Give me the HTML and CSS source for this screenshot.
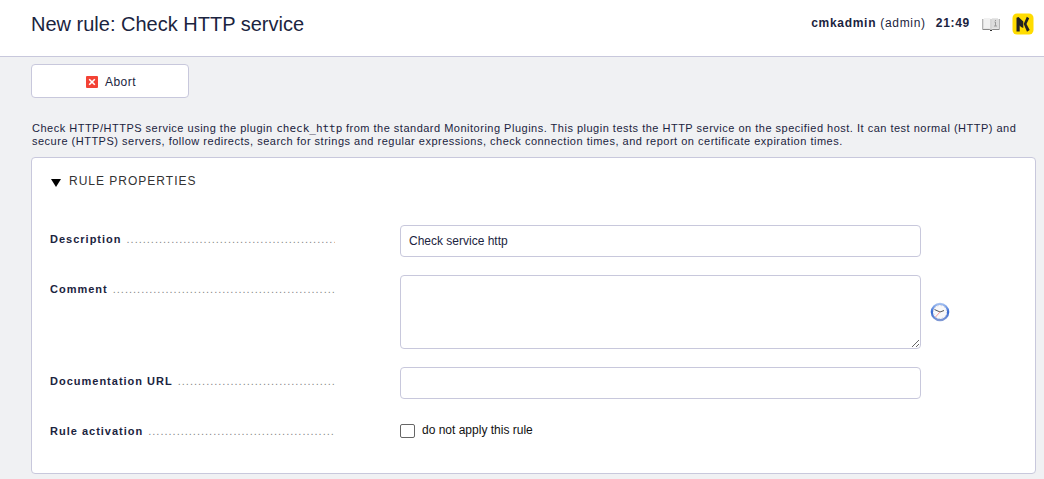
FILE: index.html
```html
<!DOCTYPE html>
<html lang="en">
<head>
<meta charset="utf-8">
<meta name="viewport" content="width=device-width, initial-scale=1">
<title>New rule: Check HTTP service</title>
<link rel="stylesheet" href="styles.css">
</head>
<body>
<header class="topbar">
  <h1 class="title">New rule: Check HTTP service</h1>
  <div class="session">
    <span class="user"><b>cmkadmin</b> (admin)</span>
    <b class="time">21:49</b>
    <svg class="manual" viewBox="0 0 18 16" role="img" aria-label="Manual">
      <path d="M.5 3v10.500h7l1.500 1 1.500-1h7V3" fill="#ddd" stroke="#b4b4b4"/>
      <path d="M2 2h5.500L9 3l1.500-1H16v10.500h-5.500L9 13.500l-1.500-1H2z" fill="#f1f1f1"/>
      <path d="M10 2.500h6V12h-6z" fill="#dcdcdc"/>
      <path d="M1 13.500h6.500L9 14.500l1.500-1H17" fill="none" stroke="#888"/>
      <path d="M8 14.500h2" stroke="#333"/>
      <path d="M9 3v10" stroke="#bbb"/>
      <path d="M12.500 6h1v4M12 10h3M13 4.500h1" fill="none" stroke="#999"/>
    </svg>
    <svg class="logo" viewBox="0 0 22 22" role="img" aria-label="Checkmk">
      <rect x=".5" y=".5" width="21" height="21" rx="4.500" fill="#ffdc00"/>
      <path d="M4.500 4.800 6.500 4l4.800 4.500v6.500L9 14l-1.300-1.500V18.500H4.500z" fill="#222"/>
      <path d="M14.800 3.800 17.200 5.200l-2.700 5.800 3.200 6-2.700 1.700-3.300-7.700z" fill="#222"/>
    </svg>
  </div>
</header>
<main class="page">
  <button class="abort" type="button">
    <svg class="abort-icon" viewBox="0 0 12 12" aria-hidden="true">
      <rect width="12" height="12" rx="1" fill="#f34235"/>
      <path d="M3.200 3.200l5.600 5.600M8.800 3.200L3.200 8.800" stroke="#fff" stroke-width="1.600"/>
    </svg>
    Abort
  </button>
  <p class="help">Check HTTP/HTTPS service using the plugin <code>check_http</code> from the standard Monitoring Plugins. This plugin tests the HTTP service on the specified host. It can test normal (HTTP) and secure (HTTPS) servers, follow redirects, search for strings and regular expressions, check connection times, and report on certificate expiration times.</p>
  <form class="panel">
    <h2 class="panel-title">
      <svg class="fold" viewBox="0 0 10 8" aria-hidden="true"><path d="M0 0h10L5 8z"/></svg>
      RULE PROPERTIES
    </h2>
    <div class="row">
      <label class="legend" for="description">Description</label>
      <input class="field" id="description" type="text" value="Check service http">
    </div>
    <div class="row">
      <label class="legend" for="comment">Comment</label>
      <textarea class="field area" id="comment"></textarea>
      <button class="stamp" type="button" aria-label="Prefix date and name">
        <svg class="clock" viewBox="0 0 20 20" aria-hidden="true">
          <defs><linearGradient id="rim" x2="0" y2="1"><stop stop-color="#a4c0f0"/><stop offset=".5" stop-color="#3569d4"/><stop offset="1" stop-color="#7f98d4"/></linearGradient></defs>
          <circle cx="10" cy="10" r="8.200" fill="#f8f8fa" stroke="url(#rim)" stroke-width="2.200"/>
          <circle cx="10" cy="10" r="6.500" fill="none" stroke="#c4c8d4" stroke-dasharray="1 2.400"/>
          <path d="M4.500 7.500 10 10l4-1.500" fill="none" stroke="#555" stroke-width="1"/>
          <path d="M10 10 5.500 15" stroke="#f49a9a" stroke-width="1"/>
        </svg>
      </button>
    </div>
    <div class="row">
      <label class="legend" for="url">Documentation URL</label>
      <input class="field" id="url" type="text">
    </div>
    <div class="row">
      <span class="legend">Rule activation</span>
      <label class="check"><input class="box" type="checkbox"> do not apply this rule</label>
    </div>
  </form>
</main>
</body>
</html>
```
FILE: styles.css
```css
* { box-sizing: border-box; }

body {
  margin: 0;
  background: #f0f1f3;
  color: #1b2440;
  font: 12px/16px "Liberation Sans", Arial, sans-serif;
}

button, input, textarea { font: inherit; color: inherit; }

.topbar {
  display: flex;
  align-items: center;
  justify-content: space-between;
  padding: 8px 10px 16px 31px;
  background: #fff;
  border-bottom: 1px solid #c8c8dc;
}

.title { margin: 0; font-size: 20px; line-height: 32px; font-weight: 400; }

.session { display: flex; align-items: center; gap: 12px; }
.user, .time { line-height: 20px; padding-bottom: 3px; letter-spacing: 0.7px; }
.user { margin-right: -2px; }
.manual { width: 18px; height: 16px; }
.logo { width: 22px; height: 22px; }

.page { padding: 7px 8px 5px 31px; }

.abort {
  display: flex;
  align-items: center;
  justify-content: center;
  gap: 7px;
  width: 158px;
  height: 34px;
  padding: 2px 0 0 2px;
  background: #fff;
  border: 1px solid #c8c8dc;
  border-radius: 4px;
  letter-spacing: 0.5px;
}
.abort-icon { width: 12px; height: 12px; }

.help { margin: 24px 1px 9px; font-size: 11px; line-height: 13px; letter-spacing: 0.5px; }
.help code { font: 11px/13px "DejaVu Sans Mono", monospace; letter-spacing: 0; }

.panel {
  padding: 15px 18px 24px;
  background: #fff;
  border: 1px solid #c8c8dc;
  border-radius: 4px;
}

.panel-title {
  display: flex;
  align-items: center;
  gap: 8px;
  margin: 0 0 36px;
  padding-left: 1px;
  color: #333;
  font-size: 12px;
  font-weight: 400;
  letter-spacing: 1px;
}
.fold { width: 10px; height: 8px; margin-top: 4px; fill: #000; }

.row { display: flex; align-items: flex-start; min-height: 32px; margin-bottom: 18px; }
.row:last-child { margin-bottom: 0; }

.legend {
  flex: none;
  width: 285px;
  margin-right: 65px;
  padding-top: 6px;
  overflow: hidden;
  white-space: nowrap;
  font-size: 11px;
  font-weight: 700;
  letter-spacing: 1px;
}
.legend::after {
  content: "......................................................................";
  margin-left: 5px;
  color: #888;
  font-weight: 400;
}

.field {
  flex: 0 1 521px;
  min-width: 0;
  height: 32px;
  padding: 0 8px;
  background: #fff;
  border: 1px solid #c8c8dc;
  border-radius: 4px;
}
.area { height: 74px; padding: 8px; resize: vertical; }

.stamp { align-self: center; margin-left: 9px; padding: 0; border: 0; background: none; }
.clock { display: block; width: 20px; height: 20px; }

.check { display: flex; align-items: center; gap: 7px; padding-top: 5px; color: #111; }
.box {
  appearance: none;
  width: 15px;
  height: 14px;
  margin: 2px 0 0;
  background: #fff;
  border: 1px solid #666;
  border-radius: 2px;
}
.box:checked { background: #15d1a0; }
```
